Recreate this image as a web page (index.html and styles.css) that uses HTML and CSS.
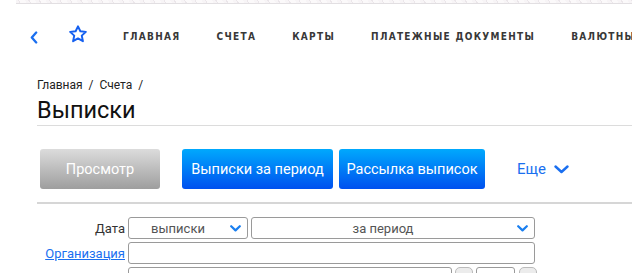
FILE: index.html
```html
<!DOCTYPE html>
<html lang="ru">
<head>
<meta charset="utf-8">
<link rel="stylesheet" href="styles.css">
</head>
<body>
<div class="topstrip"></div>
<nav class="nav">
  <a class="nav-back" href="#"><svg width="8" height="13" viewBox="0 0 8 13"><path d="M6.2 1.5 L1.8 6.5 L6.2 11.5" fill="none" stroke="#1a6ff0" stroke-width="2.3" stroke-linecap="round" stroke-linejoin="round"/></svg></a>
  <a class="nav-star" href="#"><svg width="20" height="18" viewBox="0 0 24 22"><path d="M12 1.6 L14.9 7.6 L21.6 8.4 L16.6 13 L18 19.8 L12 16.4 L6 19.8 L7.4 13 L2.4 8.4 L9.1 7.6 Z" fill="none" stroke="#1560f0" stroke-width="2.4" stroke-linejoin="round"/></svg></a>
  <ul class="nav-list">
    <li>ГЛАВНАЯ</li>
    <li>СЧЕТА</li>
    <li>КАРТЫ</li>
    <li>ПЛАТЕЖНЫЕ ДОКУМЕНТЫ</li>
    <li>ВАЛЮТНЫЕ ОПЕРАЦИИ</li>
  </ul>
</nav>
<main class="content">
  <div class="crumbs">Главная&nbsp; /&nbsp; Счета&nbsp; /</div>
  <h1 class="title">Выписки</h1>
  <div class="toolbar">
    <button class="btn btn-gray">Просмотр</button>
    <button class="btn btn-blue btn-first">Выписки за период</button>
    <button class="btn btn-blue btn-second">Рассылка выписок</button>
    <a class="more" href="#">Еще <svg width="15" height="9" viewBox="0 0 15 9"><path d="M1.5 1.5 L7.5 7 L13.5 1.5" fill="none" stroke="#1a6ff0" stroke-width="2.4" stroke-linecap="round" stroke-linejoin="round"/></svg></a>
  </div>
  <form class="form">
    <div class="row">
      <span class="label">Дата</span>
      <div class="select sel-small"><span>выписки</span><svg class="chev" width="11" height="7" viewBox="0 0 11 7"><path d="M1.2 1.2 L5.5 5.4 L9.8 1.2" fill="none" stroke="#1a7ff0" stroke-width="2.2" stroke-linecap="round" stroke-linejoin="round"/></svg></div>
      <div class="select sel-wide"><span>за период</span><svg class="chev" width="11" height="7" viewBox="0 0 11 7"><path d="M1.2 1.2 L5.5 5.4 L9.8 1.2" fill="none" stroke="#1a7ff0" stroke-width="2.2" stroke-linecap="round" stroke-linejoin="round"/></svg></div>
    </div>
    <div class="row">
      <a class="label label-link" href="#">Организация</a>
      <div class="input input-full"></div>
    </div>
    <div class="row">
      <span class="label"></span>
      <div class="input input-acc"></div>
      <div class="mini-btn"></div>
      <div class="input input-short"></div>
      <div class="mini-btn mini-last"></div>
    </div>
  </form>
</main>
</body>
</html>
```
FILE: styles.css
```css
* { box-sizing: border-box; }
html, body { margin: 0; padding: 0; background: #fff; overflow: hidden; }
body { font-family: Roboto, "Open Sans", sans-serif; color: #222; width: 632px; height: 273px; }

.topstrip {
  margin-left: 16px;
  height: 4px;
  background: repeating-linear-gradient(60deg, #f7f4f6 0 3px, #ebe6ea 3px 4px, #fbf9fa 4px 9px);
  border-bottom: 1px solid #e2dfe2;
}

.nav {
  display: flex;
  align-items: center;
  height: 63px;
  padding: 0 0 0 30px;
  white-space: nowrap;
  overflow: hidden;
}
.nav-back { display: flex; margin-top: 4px; }
.nav-star { display: flex; margin-left: 30px; margin-top: -3px; }
.nav-list {
  display: flex;
  list-style: none;
  margin: 1px 0 0 35px;
  padding: 0;
  gap: 36px;
  font-family: "DejaVu Sans Condensed", "DejaVu Sans", sans-serif;
  font-weight: bold;
  font-size: 10px;
  letter-spacing: 1.3px;
  color: #383838;
}

.content { padding-left: 37px; }
.crumbs { font-size: 12px; color: #222; margin-top: 10px; line-height: 16px; }
.title {
  margin: 3px 0 0;
  font-size: 23.5px;
  font-weight: normal;
  line-height: 28px;
  color: #111;
  padding-bottom: 1px;
  border-bottom: 1px solid #dcdcdc;
}

.toolbar {
  display: flex;
  align-items: center;
  padding: 23px 0 13px 3px;
  border-bottom: 2px solid #d6d6d6;
}
.btn {
  height: 40px;
  border: 0;
  border-radius: 3px;
  color: #fff;
  font-family: Roboto, sans-serif;
  font-size: 14.5px;
  padding: 0;
  white-space: nowrap;
}
.btn-gray { width: 120px; background: linear-gradient(#dcdcdc, #9e9e9e); }
.btn-blue { background: linear-gradient(#00a9fd, #0050ef); }
.btn-first { width: 151px; margin-left: 22px; }
.btn-second { width: 146px; margin-left: 6px; }
.more {
  margin-left: 32px;
  color: #1a6ff0;
  text-decoration: none;
  font-size: 15px;
  display: flex;
  align-items: center;
  gap: 8px;
}

.form { padding-top: 13px; }
.row { display: flex; align-items: center; margin-bottom: 3px; }
.label {
  width: 91px;
  text-align: right;
  font-size: 13px;
  color: #333;
  padding-right: 3px;
}
.label-link { color: #1a6ff0; text-decoration: underline; }
.select, .input {
  height: 22px;
  border: 1px solid #9a9a9a;
  border-radius: 3px;
  background: #fff;
}
.select {
  display: flex;
  align-items: center;
  font-size: 13px;
  color: #555;
  position: relative;
}
.select span { flex: 1; text-align: center; padding-right: 20px; }
.chev { position: absolute; right: 6px; top: 7px; }
.sel-small { width: 120px; }
.sel-wide { width: 284px; margin-left: 3px; }
.input-full { width: 407px; }
.input-acc { width: 324px; }
.mini-btn {
  width: 18px;
  height: 22px;
  margin-left: 3px;
  border: 1px solid #bbb;
  border-radius: 5px;
  background: #ececec;
}
.input-short { width: 39px; margin-left: 3px; }
.mini-last { margin-left: 4px; }
```
